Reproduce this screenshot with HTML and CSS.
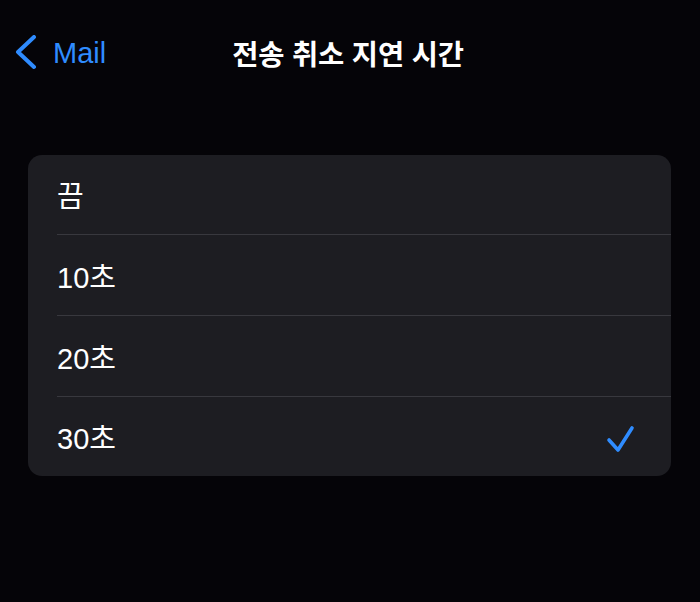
FILE: index.html
```html
<!DOCTYPE html>
<html lang="ko">
<head>
<meta charset="utf-8">
<title>전송 취소 지연 시간</title>
<link rel="stylesheet" href="styles.css">
</head>
<body>
<header class="nav">
  <a class="back">
    <svg class="chev" width="26" height="36" viewBox="0 0 26 36"><path d="M20 2 L4 17 L20 32" fill="none" stroke="#2f8cff" stroke-width="4" stroke-linecap="round" stroke-linejoin="round"/></svg>
    <span class="back-label">Mail</span>
  </a>
  <h1 class="title">전송 취소 지연 시간</h1>
</header>
<main class="content">
  <ul class="list">
    <li class="row"><span class="label">끔</span></li>
    <li class="row"><span class="label">10초</span></li>
    <li class="row"><span class="label">20초</span></li>
    <li class="row selected"><span class="label">30초</span>
      <svg class="check" width="32" height="30" viewBox="0 0 32 30"><path d="M4 16 L13 26 L27 4" fill="none" stroke="#2f8cff" stroke-width="3.6" stroke-linecap="round" stroke-linejoin="round"/></svg>
    </li>
  </ul>
</main>
</body>
</html>
```
FILE: styles.css
```css
html, body {
  margin: 0;
  padding: 0;
  background: #050408;
  color: #ffffff;
  font-family: "Liberation Sans", "Noto Sans CJK KR", sans-serif;
}
.nav {
  position: relative;
  height: 104px;
  display: flex;
  align-items: center;
  justify-content: center;
}
.back {
  position: absolute;
  left: 14px;
  top: 35px;
  display: flex;
  align-items: center;
  gap: 13px;
  color: #2f8cff;
}
.chev {
  display: block;
}
.back-label {
  font-size: 29px;
  line-height: 34px;
}
.title {
  margin: 0;
  font-family: "Noto Sans CJK KR", sans-serif;
  font-size: 28.5px;
  font-weight: 700;
  letter-spacing: -0.2px;
  transform: translateX(-2px);
}
.content {
  padding: 51px 29px 0 28px;
}
.list {
  list-style: none;
  margin: 0;
  padding: 0;
  background: #1d1d22;
  border-radius: 14px;
  overflow: hidden;
}
.row {
  position: relative;
  height: 81px;
  display: flex;
  align-items: center;
  justify-content: space-between;
  padding: 0 34px 0 29px;
}
.row:first-child {
  height: 80px;
}
.row:last-child {
  height: 79px;
}
.row + .row::before {
  content: "";
  position: absolute;
  left: 29px;
  right: 0;
  top: -1px;
  height: 1px;
  background: #38383e;
}
.label {
  font-size: 29px;
  line-height: 34px;
  padding-top: 4px;
  font-family: "Liberation Sans", "Noto Sans CJK KR", sans-serif;
}
.check {
  display: block;
  margin-top: 4px;
}
```
